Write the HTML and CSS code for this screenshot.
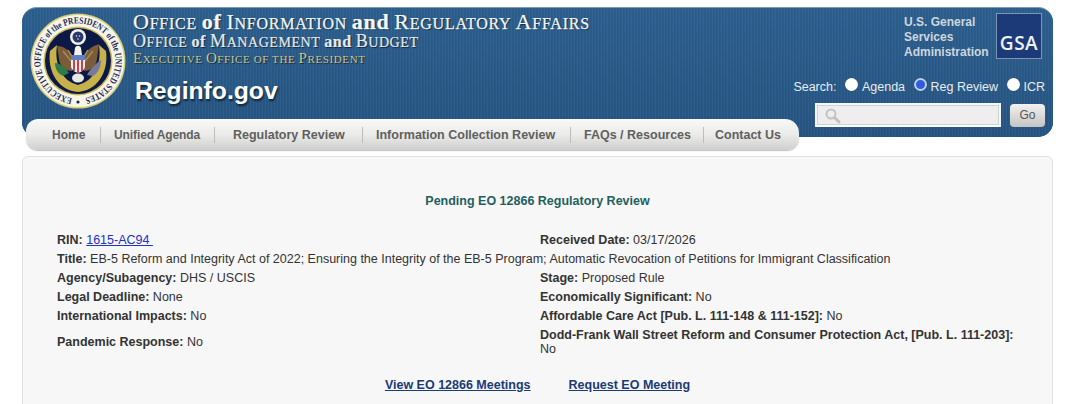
FILE: index.html
```html
<!DOCTYPE html>
<html lang="en">
<head>
<meta charset="utf-8">
<title>Reginfo.gov</title>
<link rel="stylesheet" href="styles.css">
</head>
<body>
<header class="banner">
  <div class="seal-wrap">
    <svg class="seal" width="96" height="96" viewBox="0 0 96 96" role="img" aria-label="Seal">
      <defs>
        <path id="sealRing" d="M48 85.500 A37.500 37.500 0 1 1 48.010 85.500"/>
      </defs>
      <circle cx="48" cy="48" r="47.500" fill="#d9cc7a"/>
      <circle cx="48" cy="48" r="46" fill="#f7f5e6"/>
      <circle cx="48" cy="48" r="34.500" fill="#c9b85a"/>
      <circle cx="48" cy="48" r="33" fill="#0c1846"/>
      <text class="seal-text"><textPath href="#sealRing" startOffset="2.500%" textLength="222" lengthAdjust="spacingAndGlyphs">EXECUTIVE OFFICE of the PRESIDENT of the UNITED STATES</textPath></text>
      <circle cx="48" cy="89" r="1.600" fill="#1a2558"/>
      <path d="M20 38 L27 32 C24 52 32 68 48 72 C64 68 72 52 69 32 L76 38 C79 60 66 78 48 79 C30 78 17 60 20 38 Z" fill="#c7b24a"/>
      <path d="M27 33 C34 33 40 38 43 43 L42 58 C36 58 30 54 29 46 Z" fill="#7a5c38"/>
      <path d="M69 31 C62 33 56 38 53 43 L54 58 C60 58 66 54 67 46 Z" fill="#7a5c38"/>
      <path d="M33 38 L41 48 M38 37 L42 44 M63 38 L55 48 M58 37 L54 44" stroke="#a88a5a" stroke-width="1.500" fill="none"/>
      <circle cx="48" cy="24" r="8" fill="#f4f2e6"/>
      <circle cx="48" cy="24" r="5.500" fill="#28386c"/>
      <circle cx="46.500" cy="23" r=".8" fill="#dcdcdc"/><circle cx="49.500" cy="23" r=".8" fill="#dcdcdc"/><circle cx="48" cy="26" r=".8" fill="#dcdcdc"/>
      <path d="M45 35 C46 32 50 32 51 35 L52 42 H44 Z" fill="#f5f3ea"/>
      <path d="M41 42 H55 V53 C55 57 51 59 48 60 C45 59 41 57 41 53 Z" fill="#f3ecec"/>
      <path d="M41 42 H55 V47 H41 Z" fill="#6080c0"/>
      <path d="M43 47 h2 v11 h-2 Z M47 47 h2 v13 h-2 Z M51 47 h2 v11 h-2 Z" fill="#c7444d"/>
      <ellipse cx="48" cy="65" rx="6" ry="4.500" fill="#e8e8e2"/>
      <path d="M25 50 C30 50 36 55 39 60 L33 63 C28 61 25 56 25 50 Z" fill="#2f7a48"/>
      <path d="M71 47 C66 50 60 56 57 62 L63 63 C68 60 71 54 71 47 Z" fill="#77789a"/>
    </svg>
  </div>
  <div class="titles">
    <div class="t1"><span class="cap">O</span>FFICE <b>of</b> <span class="cap">I</span>NFORMATION <b>and</b> <span class="cap">R</span>EGULATORY <span class="cap">A</span>FFAIRS</div>
    <div class="t2"><span class="cap">O</span>FFICE <b>of</b> <span class="cap">M</span>ANAGEMENT <b>and</b> <span class="cap">B</span>UDGET</div>
    <div class="t3"><span class="cap">E</span>XECUTIVE <span class="cap">O</span>FFICE OF THE <span class="cap">P</span>RESIDENT</div>
    <div class="brand">Reginfo.gov</div>
  </div>
  <div class="right">
    <div class="gsa-row">
      <div class="gsa-name">U.S. General<br>Services<br>Administration</div>
      <div class="gsa-logo">GSA</div>
    </div>
    <div class="search-row">
      <span>Search:</span>
      <span class="radio"></span><span>Agenda</span>
      <span class="radio on"></span><span>Reg Review</span>
      <span class="radio"></span><span>ICR</span>
    </div>
    <div class="go-row">
      <div class="search-box">
        <svg width="18" height="18" viewBox="0 0 18 18" aria-hidden="true"><circle cx="7" cy="7" r="4.500" fill="none" stroke="#c2c2c0" stroke-width="2"/><path d="M10.500 10.500 L15 15" stroke="#c2c2c0" stroke-width="3" stroke-linecap="round"/></svg>
      </div>
      <div class="go">Go</div>
    </div>
  </div>
</header>
<nav class="tabs">
  <a class="tab t-home">Home</a>
  <a class="tab t-ua">Unified Agenda</a>
  <a class="tab t-rr">Regulatory Review</a>
  <a class="tab t-ic">Information Collection Review</a>
  <a class="tab t-fq">FAQs / Resources</a>
  <a class="tab t-cu">Contact Us</a>
</nav>
<main class="panel">
  <h1 class="heading">Pending EO 12866 Regulatory Review</h1>
  <div class="grid">
    <div><b>RIN:</b> <a class="rin">1615-AC94&nbsp;</a></div>
    <div><b>Received Date:</b> 03/17/2026</div>
    <div class="wide"><b>Title:</b> EB-5 Reform and Integrity Act of 2022; Ensuring the Integrity of the EB-5 Program; Automatic Revocation of Petitions for Immigrant Classification</div>
    <div><b>Agency/Subagency:</b> DHS / USCIS</div>
    <div><b>Stage:</b> Proposed Rule</div>
    <div><b>Legal Deadline:</b> None</div>
    <div><b>Economically Significant:</b> No</div>
    <div><b>International Impacts:</b> No</div>
    <div><b>Affordable Care Act [Pub. L. 111-148 &amp; 111-152]:</b> No</div>
    <div><b>Pandemic Response:</b> No</div>
    <div><b>Dodd-Frank Wall Street Reform and Consumer Protection Act, [Pub. L. 111-203]:</b> No</div>
  </div>
  <div class="links">
    <a>View EO 12866 Meetings</a>
    <a>Request EO Meeting</a>
  </div>
</main>
</body>
</html>
```
FILE: styles.css
```css
* { box-sizing: border-box; }
html, body { margin: 0; height: 404px; overflow: hidden; background: #fff; }
body { font-family: "Liberation Sans", Arial, sans-serif; color: #333; padding: 7px 27px 0 22px; }

.banner {
  height: 130px;
  display: flex;
  border-radius: 15px;
  background-color: #2a5a8a;
  background-image:
    repeating-linear-gradient(90deg, rgba(255,255,255,.035) 0 1px, rgba(0,0,0,.035) 1px 2px, transparent 2px 3px),
    linear-gradient(#2c5f8e, #265482);
  border-top: 1px solid #7d9ab5;
  color: #fff;
}
.seal-wrap { padding: 5px 0 0 7.500px; width: 111px; flex: none; }
.seal { display: block; }
.seal-text { font: bold 9.500px "Liberation Serif", "Times New Roman", serif; fill: #1c2860; }

.titles { flex: none; width: 480px; font-family: "Liberation Serif", "Times New Roman", serif; padding-top: 3px; }
.t1 { font-size: 16px; line-height: 22px; letter-spacing: .76px; color: #f4f6f7; text-shadow: 1px 1px 1px rgba(0,0,0,.6); -webkit-text-stroke: .25px #f4f6f7; white-space: nowrap; }
.t1 .cap { font-size: 22px; }
.t1 b { font-size: 22px; }
.t2 { font-size: 14px; line-height: 16px; letter-spacing: .56px; color: #e6eaec; text-shadow: 1px 1px 1px rgba(0,0,0,.6); -webkit-text-stroke: .2px #e6eaec; margin-top: -2px; white-space: nowrap; }
.t2 .cap { font-size: 18px; }
.t2 b { font-size: 16px; }
.t3 { font-size: 11px; line-height: 15px; letter-spacing: .6px; color: #c9c68e; text-shadow: 1px 1px 1px rgba(0,0,0,.6); white-space: nowrap; }
.t3 .cap { font-size: 15px; }
.brand { font: bold 24.700px/32px "Liberation Sans", Arial, sans-serif; color: #fff; text-shadow: 1px 2px 2px rgba(0,0,0,.6); margin: 8px 0 0 2px; }

.right { margin-left: auto; width: 280px; display: flex; flex-direction: column; padding-right: 8px; }
.gsa-row { display: flex; justify-content: flex-end; gap: 4px; padding-top: 5px; padding-right: 3px; }
.gsa-name { font-size: 12px; line-height: 15px; font-weight: bold; color: #cfd6dd; padding-top: 2px; width: 88px; }
.gsa-logo { width: 46px; height: 46px; background: #1d3a78; border: 1px solid #7d94b8; color: #eef1f5; font: 600 19px/58px "Open Sans", "Liberation Sans", sans-serif; text-align: center; letter-spacing: .5px; white-space: nowrap; }

.search-row { display: flex; justify-content: flex-end; align-items: center; font-size: 12.500px; line-height: 15px; color: #e8ecef; margin-top: 20px; white-space: nowrap; }
.radio { width: 13px; height: 13px; border-radius: 50%; background: #fff; margin: -6px 3.500px 0 9px; box-shadow: 0 0 1px rgba(0,0,0,.4); }
.radio.on { background: #2f5be0; border: 2px solid #bcd0f0; }
.go-row { display: flex; justify-content: flex-end; align-items: center; margin-top: 8px; gap: 9px; }
.search-box { width: 186px; height: 24px; background: #eeeeee; border: 2px solid; border-color: #f4f6f8 #f4f6f8 #fff #f4f6f8; box-shadow: inset 0 0 0 1px #ccd3d8; padding: 2px 0 0 7px; }
.search-box svg { display: block; }
.go { width: 35px; height: 23px; border-radius: 4px; background: linear-gradient(#f2f2f0, #c4c4c2); color: #555; font-size: 12px; line-height: 23px; text-align: center; }

.tabs {
  width: 773px;
  height: 31px;
  margin: -18px 0 6px 4px;
  position: relative;
  display: flex;
  align-items: center;
  border-radius: 12px 14px 12px 12px;
  background: linear-gradient(#f8f8f7 0, #ebebe9 50%, #cfcfcd 100%);
  box-shadow: 0 1px 1px rgba(0,0,0,.25);
  font-size: 12.500px;
  font-weight: bold;
  color: #5f5f5f;
}
.tab { display: block; height: 16px; line-height: 16px; white-space: nowrap; border-right: 1px solid #bdbdbb; }
.t-home { margin-left: 26px; width: 49px; font-size: 12px; }
.t-ua { margin-left: 13px; width: 101px; font-size: 12px; letter-spacing: -.1px; }
.t-rr { margin-left: 18px; width: 130px; }
.t-ic { margin-left: 13px; width: 195px; }
.t-fq { margin-left: 13px; width: 120px; }
.t-cu { margin-left: 11px; border-right: 0; }

.panel {
  height: 260px;
  border: 1px solid #e2e2e0;
  border-radius: 6px;
  background: #f7f7f7;
  padding: 37px 34px 0 34px;
  font-size: 12.500px;
}
.heading { margin: 0 0 25px; font-size: 12.500px; line-height: 14px; font-weight: bold; color: #1f5f5f; text-align: center; }
.grid { display: grid; grid-template-columns: 483px 1fr; line-height: 14px; row-gap: 5px; align-items: center; }
.wide { grid-column: 1 / -1; }
.rin { color: #2030c8; text-decoration: underline; }
.links { display: flex; justify-content: center; gap: 38px; margin-top: 22px; font-weight: bold; line-height: 14px; color: #1a3a78; }
.links a { text-decoration: underline; }
```
